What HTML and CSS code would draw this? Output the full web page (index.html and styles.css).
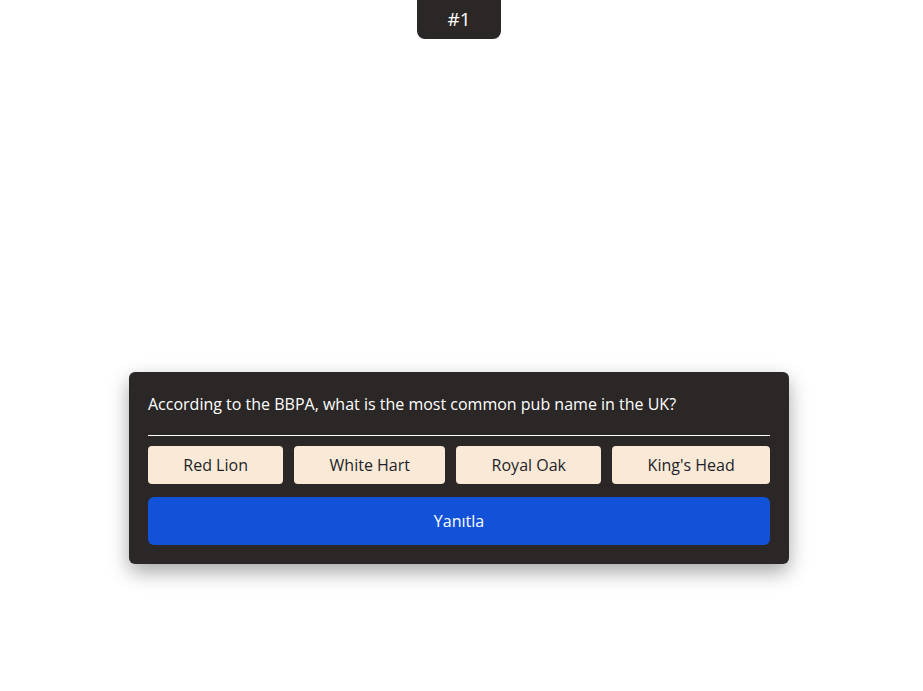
FILE: index.html
```html
<!DOCTYPE html>
<html lang="tr">
<head>
<meta charset="utf-8">
<title>Quiz</title>
<link rel="stylesheet" href="styles.css">
</head>
<body>
<div class="stage">
  <div class="badge">#1</div>
  <div class="card">
    <p class="question">According to the BBPA, what is the most common pub name in the UK?</p>
    <div class="options">
      <button class="option">Red Lion</button>
      <button class="option">White Hart</button>
      <button class="option">Royal Oak</button>
      <button class="option">King's Head</button>
    </div>
    <button class="submit">Yanıtla</button>
  </div>
</div>
</body>
</html>
```
FILE: styles.css
```css
html, body {
  margin: 0;
  padding: 0;
  background: #ffffff;
}
body {
  font-family: "Open Sans", "Noto Sans", sans-serif;
  width: 923px;
  height: 691px;
  overflow: hidden;
}
.stage {
  display: flex;
  flex-direction: column;
  align-items: flex-start;
  padding-left: 129px;
}
.badge {
  margin-left: 288px;
  width: 84px;
  height: 39px;
  box-sizing: border-box;
  background: #2b2726;
  color: #ffffff;
  border-radius: 0 0 8px 8px;
  font-size: 19px;
  font-weight: 500;
  display: flex;
  align-items: center;
  justify-content: center;
  padding-bottom: 2px;
}
.card {
  margin-top: 333px;
  width: 660px;
  box-sizing: border-box;
  background: #2b2726;
  border-radius: 6px;
  padding: 19px;
  box-shadow: 0 8px 20px rgba(0, 0, 0, 0.35);
  display: flex;
  flex-direction: column;
}
.question {
  margin: 0;
  color: #ffffff;
  font-size: 16px;
  line-height: 26px;
  padding-bottom: 18px;
  border-bottom: 1px solid #ffffff;
}
.options {
  display: flex;
  gap: 11px;
  margin-top: 10px;
}
.option {
  flex: 1 1 auto;
  height: 38px;
  border: none;
  border-radius: 4px;
  background: #fae9d6;
  color: #231f2a;
  font-family: inherit;
  font-size: 16px;
  padding: 0 10px;
}
.submit {
  margin-top: 13px;
  height: 48px;
  border: none;
  border-radius: 6px;
  background: #1152d9;
  color: #ffffff;
  font-family: inherit;
  font-size: 16px;
}
```
